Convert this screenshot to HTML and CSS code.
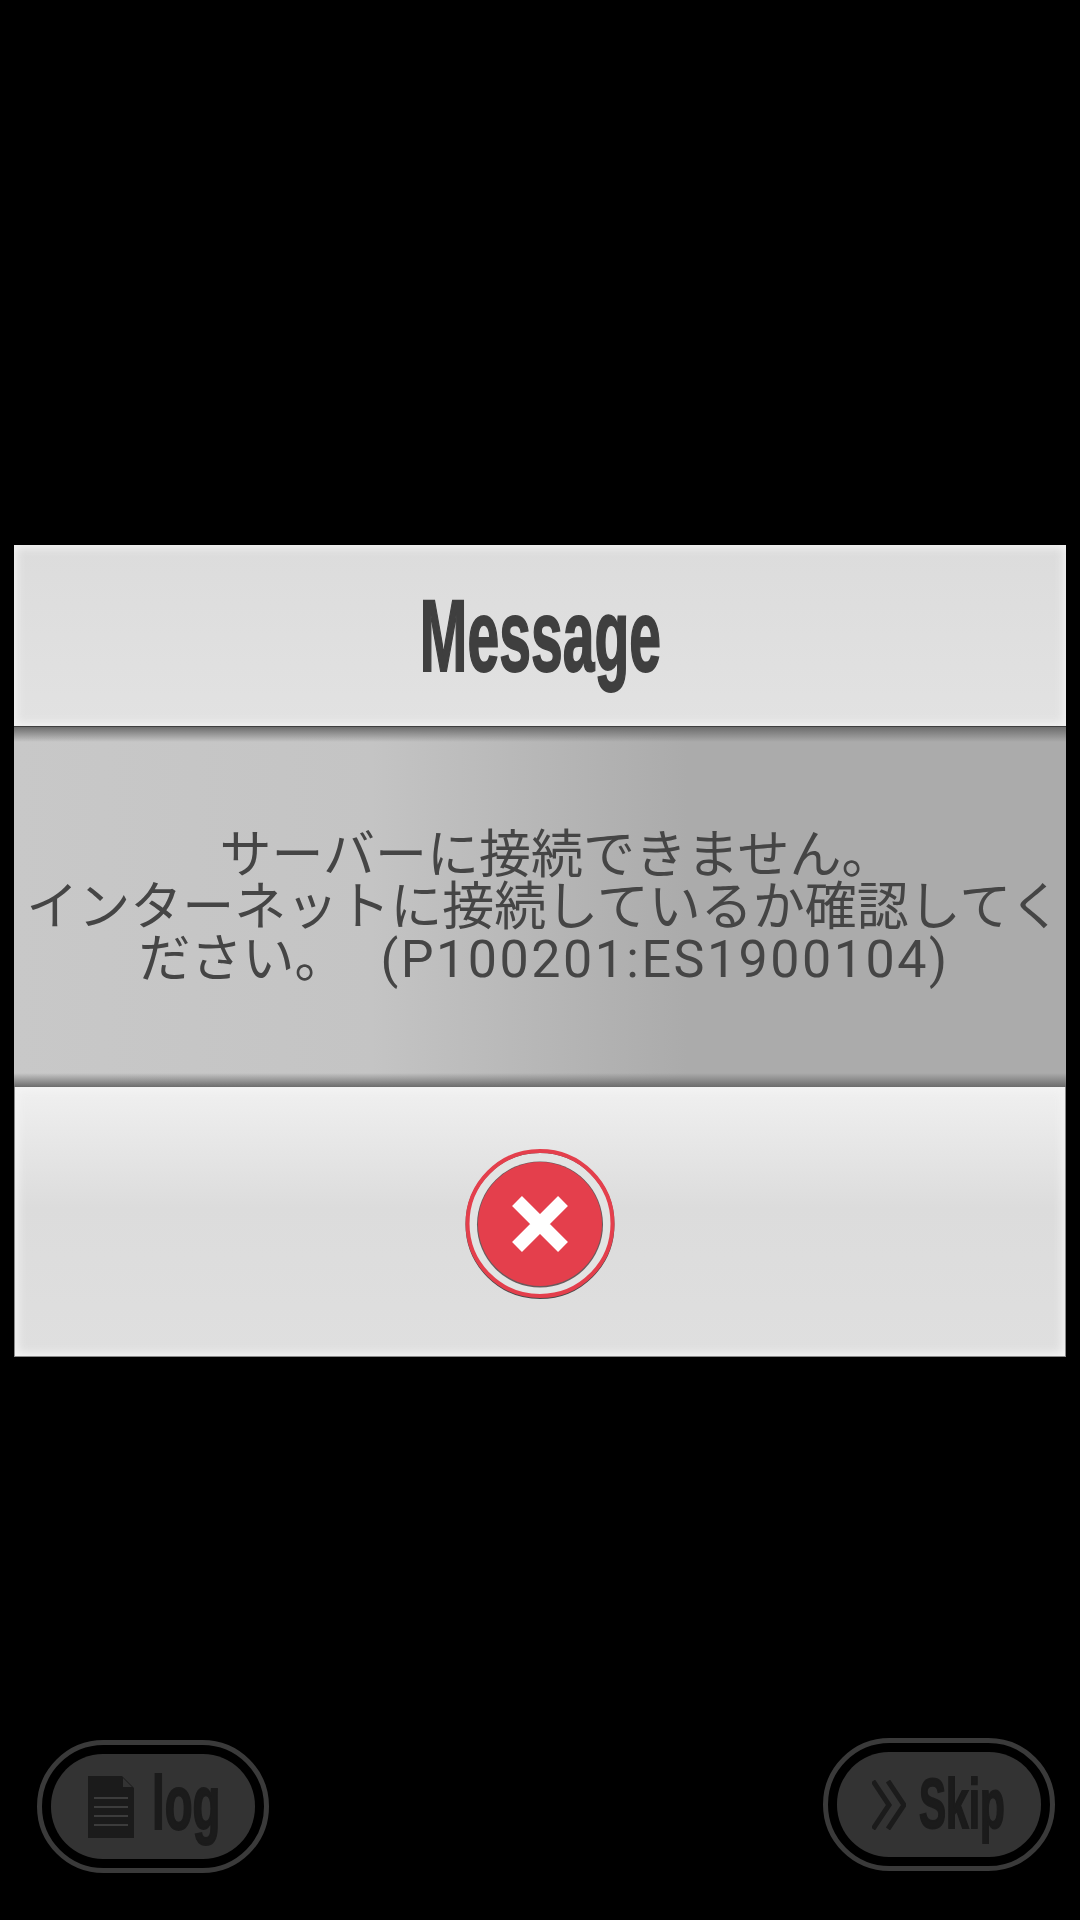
FILE: index.html
```html
<!DOCTYPE html>
<html lang="ja">
<head>
<meta charset="UTF-8">
<meta name="viewport" content="width=device-width, initial-scale=1.0">
<title>Message</title>
<link rel="stylesheet" href="styles.css">
</head>
<body>

<div class="dialog">
    <div class="dialog-head">
        <h1 class="dialog-title">Message</h1>
    </div>
    <div class="dialog-body">
        <p class="dialog-text"><span class="first-line">サーバーに接続できません。</span><br>インターネットに接続しているか確認してください。<span class="code">(P100201:ES1900104)</span></p>
    </div>
    <div class="dialog-foot">
        <svg class="close-btn" viewBox="0 0 150 150" role="img" aria-label="close">
            <circle cx="75" cy="75.5" r="73" fill="#e2e4e3" stroke="#4a4a4a" stroke-width="3"/>
            <circle cx="75" cy="74.5" r="72.5" fill="none" stroke="#e43f4c" stroke-width="4"/>
            <circle cx="75" cy="75.5" r="63" fill="#6a5a5c"/>
            <circle cx="75" cy="75" r="62" fill="#e43f4c"/>
            <path d="M52 52 L98 98 M98 52 L52 98" stroke="#fff" stroke-width="14" fill="none"/>
        </svg>
    </div>
</div>

<div class="bottom-bar">
    <div class="pill pill-log">
        <div class="pill-inner">
            <svg class="icon-doc" viewBox="0 0 46 62">
                <path d="M0 0H34L46 12V62H0Z" fill="#1b1b1b"/>
                <path d="M35 2L44 11H35Z" fill="#333"/>
                <path d="M6 22H40M6 31H40M6 40H40M6 49H40" stroke="#3c3c3c" stroke-width="2" fill="none"/>
            </svg>
            <span class="pill-label pill-label-log">log</span>
        </div>
    </div>
    <div class="pill pill-skip">
        <div class="pill-inner">
            <svg class="icon-skip" viewBox="0 0 34 50">
                <path d="M1 1L17 25L1 49M16 1L32 25L16 49" stroke="#1b1b1b" stroke-width="5" fill="none"/>
            </svg>
            <span class="pill-label pill-label-skip">Skip</span>
        </div>
    </div>
</div>

</body>
</html>
```

FILE: styles.css
```css
html, body {
    margin: 0;
    padding: 0;
}
body {
    width: 1080px;
    height: 1920px;
    overflow: hidden;
    background-color: #000;
    font-family: Roboto, "Noto Sans CJK JP", sans-serif;
}
.dialog {
    width: 1052px;
    margin: 545px 14px 0;
}
.dialog-head {
    height: 181px;
    display: flex;
    align-items: center;
    justify-content: center;
    background: linear-gradient(#dcdcdc, #e2e2e2);
    box-shadow: inset 0 0 8px 3px #f2f2f2;
}
.dialog-title {
    margin: 0;
    color: #3f3f3f;
    font-family: "Liberation Sans Narrow", "Liberation Sans", sans-serif;
    font-size: 102px;
    font-weight: 700;
    line-height: 1;
    -webkit-text-stroke: 2px #3f3f3f;
    transform: scaleX(0.56);
}
.dialog-body {
    height: 361px;
    box-sizing: border-box;
    border-top: 1px solid #3e3e3e;
    padding-top: 2px;
    display: flex;
    align-items: center;
    background:
        linear-gradient(#6c6c6c, rgba(120, 120, 120, 0) 15px, rgba(120, 120, 120, 0) 346px, #6c6c6c),
        linear-gradient(90deg, #c8c8c8, #c4c4c4 34%, #ababab 64%, #ababab);
}
.dialog-text {
    margin: 0;
    width: 100%;
    box-sizing: border-box;
    padding-left: 8px;
    color: #454545;
    font-size: 52px;
    line-height: 52px;
    text-align: center;
}
.first-line {
    padding-left: 25px;
}
.code {
    padding-left: 34px;
    letter-spacing: 2.5px;
}
.dialog-foot {
    height: 270px;
    box-sizing: border-box;
    border: 1px solid #8a8a8a;
    border-top: 0;
    padding-top: 62px;
    display: flex;
    justify-content: center;
    align-items: flex-start;
    background: linear-gradient(#f0f0f0, #dcdcdc 45%, #dfdfdf);
    box-shadow: inset 0 0 8px 3px #f4f4f4;
}
.close-btn {
    width: 150px;
    height: 150px;
}
.bottom-bar {
    display: flex;
    justify-content: space-between;
    align-items: flex-start;
    margin-top: 381px;
    padding: 0 25px 0 37px;
}
.pill {
    width: 232px;
    height: 133px;
    box-sizing: border-box;
    padding: 9px;
    border: 5px solid #3a3a3a;
    border-radius: 67px;
}
.pill-log {
    margin-top: 2px;
}
.pill-inner {
    height: 100%;
    display: flex;
    align-items: center;
    background-color: #333;
    border-radius: 52px;
}
.pill-label {
    color: #1b1b1b;
    font-family: "Liberation Sans Narrow", "Liberation Sans", sans-serif;
    font-weight: 700;
    line-height: 1;
    -webkit-text-stroke: 2px #1b1b1b;
    transform-origin: left center;
}
.icon-doc {
    flex-shrink: 0;
    width: 46px;
    height: 62px;
    margin: 0 18px 0 37px;
}
.pill-label-log {
    margin-top: -8px;
    font-size: 76px;
    transform: scaleX(0.6);
}
.icon-skip {
    flex-shrink: 0;
    width: 34px;
    height: 50px;
    margin: 0 13px 0 35px;
}
.pill-label-skip {
    margin-top: -2px;
    font-size: 70px;
    transform: scaleX(0.58);
}
```
